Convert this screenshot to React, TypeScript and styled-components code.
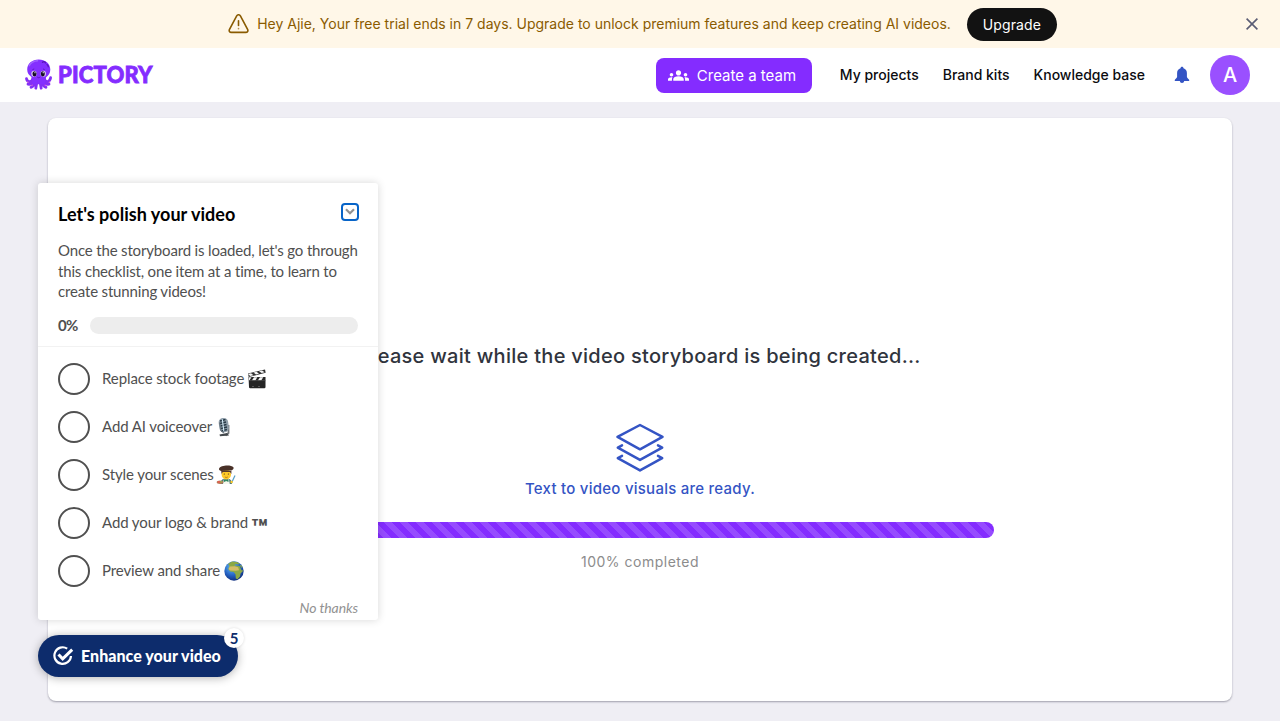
import React from "react";
import styled, { createGlobalStyle } from "styled-components";
import { MdGroups } from "react-icons/md";

const GlobalStyle = createGlobalStyle`
  *, *::before, *::after { box-sizing: border-box; }
  html, body, #root { height: 100%; margin: 0; }
  body { background: #efeef4; font-family: Inter, "Liberation Sans", sans-serif; overflow: hidden; }
  button { font: inherit; border: 0; padding: 0; background: none; cursor: pointer; }
  svg { display: block; flex: none; }
`;

const Page = styled.div`
  position: relative;
  display: flex;
  flex-direction: column;
  height: 721px;
`;

const Banner = styled.div`
  flex: none;
  display: grid;
  grid-template-columns: 56px 1fr 56px;
  align-items: center;
  height: 48px;
  background: #fff7e8;
  color: #8a5b00;
`;

const BannerContent = styled.div`
  grid-column: 2;
  display: flex;
  align-items: center;
  justify-content: center;
  padding-left: 5px;
`;

const BannerText = styled.span`
  margin: 0 16px 0 8px;
  font-size: 14px;
  line-height: 20px;
  white-space: nowrap;
`;

const UpgradeButton = styled.button`
  width: 90px;
  height: 33px;
  border-radius: 17px;
  background: #121212;
  color: #fff;
  font-size: 14px;
  letter-spacing: 0.1px;
`;

const CloseButton = styled.button`
  justify-self: center;
  color: #5a5c74;
`;

const Header = styled.header`
  flex: none;
  display: flex;
  align-items: center;
  height: 54px;
  padding: 0 30px 0 24px;
  background: #fff;
`;

const Logo = styled.div`
  display: flex;
  align-items: center;
  gap: 4px;
  margin-right: auto;
`;

const LogoText = styled.span`
  color: #842cff;
  font-family: Lato, sans-serif;
  font-size: 22px;
  font-weight: 900;
  letter-spacing: 0.15px;
  line-height: 30px;
  -webkit-text-stroke: 0.8px #842cff;
`;

const TeamButton = styled.button`
  display: flex;
  align-items: center;
  gap: 8px;
  width: 156px;
  height: 35px;
  margin-right: 28px;
  padding-left: 12px;
  border-radius: 8px;
  background: #842cff;
  color: #fff;
  font-size: 15px;
  white-space: nowrap;
`;

const Nav = styled.nav`
  display: flex;
  gap: 24px;
  margin-right: 29px;
`;

const NavLink = styled.span`
  color: #0c0c10;
  font-size: 14px;
  font-weight: 500;
  line-height: 20px;
  white-space: nowrap;
`;

const Avatar = styled.div`
  display: grid;
  place-items: center;
  width: 40px;
  height: 40px;
  margin-left: 20px;
  border-radius: 50%;
  background: #9a50ff;
  color: #fff;
  font-size: 20px;
  font-weight: 500;
`;

const Stage = styled.main`
  flex: 1;
  display: flex;
  padding: 16px 48px 20px;
`;

const StoryCard = styled.section`
  flex: 1;
  display: flex;
  flex-direction: column;
  align-items: center;
  padding-top: 223px;
  border-radius: 8px;
  background: #fff;
  box-shadow: 0 1px 2px rgba(30, 30, 50, 0.38);
`;

const WaitTitle = styled.h1`
  margin: 0;
  color: #30343d;
  font-size: 20px;
  font-weight: 450;
  letter-spacing: 0.28px;
  line-height: 30px;
`;

const LayersIcon = styled.svg`
  margin-top: 52px;
`;

const ReadyText = styled.p`
  margin: 6px 0 0;
  color: #3454c4;
  font-size: 15px;
  font-weight: 450;
  letter-spacing: 0.25px;
  line-height: 22px;
`;

const ProgressBar = styled.div`
  width: 707px;
  height: 16px;
  margin-top: 22px;
  border-radius: 8px;
  background: linear-gradient(
      45deg,
      rgba(255, 255, 255, 0.15) 25%,
      transparent 25%,
      transparent 50%,
      rgba(255, 255, 255, 0.15) 50%,
      rgba(255, 255, 255, 0.15) 75%,
      transparent 75%
    )
    0 0 / 16px 16px #842cff;
`;

const ProgressLabel = styled.p`
  margin: 14px 0 0;
  color: #8c8c8c;
  font-size: 14px;
  letter-spacing: 0.5px;
  line-height: 20px;
`;

const Checklist = styled.aside`
  position: absolute;
  left: 38px;
  top: 183px;
  display: flex;
  flex-direction: column;
  width: 340px;
  height: 436.5px;
  border-radius: 3px;
  background: #fff;
  box-shadow: 0 0 8px rgba(0, 0, 0, 0.16);
  color: #505050;
  font-family: Lato, sans-serif;
`;

const ChecklistHead = styled.div`
  height: 163.5px;
  padding: 18px 20px 0;
  border-bottom: 1.5px solid #f2f2f2;
`;

const TitleRow = styled.div`
  display: flex;
  justify-content: space-between;
`;

const ChecklistTitle = styled.h2`
  margin: 0;
  color: #000;
  font-size: 18px;
  font-weight: 700;
  letter-spacing: 0.02px;
  line-height: 26px;
`;

const CollapseButton = styled.button`
  display: grid;
  place-items: center;
  width: 18px;
  height: 18px;
  margin: 1.5px -1px 0 0;
  border: 2px solid #0864c8;
  border-radius: 4px;
`;

const Description = styled.p`
  margin: 13px -4px 0 0;
  font-size: 15px;
  letter-spacing: -0.16px;
  line-height: 20.5px;
  white-space: nowrap;
`;

const PercentRow = styled.div`
  display: flex;
  align-items: center;
  height: 17px;
  margin-top: 15px;
  font-size: 15px;
  font-weight: 700;
  letter-spacing: -0.7px;
`;

const PercentValue = styled.span`
  width: 32px;
`;

const PercentTrack = styled.div`
  flex: 1;
  height: 17px;
  border-radius: 9px;
  background: #ededed;
`;

const Tasks = styled.ul`
  display: flex;
  flex-direction: column;
  gap: 16px;
  margin: 0;
  padding: 16px 20px 0;
  list-style: none;
`;

const Task = styled.li`
  display: flex;
  align-items: center;
  height: 32px;
  font-size: 15px;
  letter-spacing: -0.1px;
`;

const TaskCircle = styled.span`
  width: 32px;
  height: 32px;
  margin-right: 12px;
  border: 2px solid #505050;
  border-radius: 50%;
`;

const TaskLabel = styled.span<{ $gap: number }>`
  margin: -1px ${(p) => p.$gap}px 0 0;
  white-space: nowrap;
`;

const Dismiss = styled.button`
  align-self: flex-end;
  margin: 11px 20px 0;
  color: #929292;
  font-size: 14px;
  font-style: italic;
  letter-spacing: -0.1px;
  line-height: 20px;
`;

const Launcher = styled.button`
  position: absolute;
  left: 38px;
  top: 634.5px;
  display: flex;
  align-items: center;
  gap: 7px;
  width: 200px;
  height: 42px;
  padding-left: 15px;
  border-radius: 21px;
  background: #0d2c6c;
  box-shadow: 0 1px 10px rgba(0, 0, 0, 0.3);
  color: #fff;
  font-family: Lato, sans-serif;
  font-size: 16px;
  font-weight: 900;
  letter-spacing: 0.03px;
  white-space: nowrap;
`;

const LauncherBadge = styled.span`
  position: absolute;
  right: -6px;
  top: -6.5px;
  display: grid;
  place-items: center;
  width: 20px;
  height: 20px;
  border-radius: 50%;
  background: #fff;
  box-shadow: 0 0 3px rgba(0, 0, 0, 0.15);
  color: #0d2c6c;
  font-size: 15px;
  font-weight: 700;
  line-height: 20px;
`;

const Octopus = () => (
  <svg width="30" height="32" viewBox="0 0.8 30 32">
    <g fill="none" stroke="#8430f5" strokeWidth="2.8" strokeLinecap="round">
      <path d="M9 20C7 26 3 23 2.500 20.500M20 20c2 6 6 3 6.600-.5M10 21c-1 6-4 5-6 5M19 21c1 6 4 5 6 5M11 22c0 6-2 6-4 7M18 22c0 6 2 6 4 7M13 23l-1.200 7M16 23l1.200 7" />
    </g>
    <path fill="#8430ff" d="M14.700 1.400C8 1.400 3.200 5.700 3.200 11.400c0 3.600 1.800 5.700 4.300 7.500L8.500 26h12.400l1.200-7c2.600-1.800 4.200-4 4.200-7.600 0-5.700-5-10-11.600-10Z" />
    <path d="M5.200 7.400C7 4.300 10 2.600 13.500 2.500" stroke="#a063ff" strokeWidth="1.500" fill="none" strokeLinecap="round" />
    <path d="M18.500 4c1-1 2.600-.4 3 .7M23 6.500c1 .4 1.200 1.200 1.300 2" stroke="#5a16bc" strokeWidth="1.400" fill="none" strokeLinecap="round" />
    <ellipse cx="10" cy="15.500" rx="2.700" ry="3" fill="#d8c5ee" />
    <ellipse cx="19.300" cy="15.500" rx="2.700" ry="3" fill="#d8c5ee" />
    <ellipse cx="10.500" cy="15.600" rx="2" ry="2.600" fill="#160b25" />
    <ellipse cx="18.800" cy="15.600" rx="2" ry="2.600" fill="#160b25" />
    <circle cx="11" cy="14.500" r=".6" fill="#fff" />
    <circle cx="19.200" cy="14.500" r=".6" fill="#fff" />
    <path d="M8.500 11.300l1.700-.5M19 10.800l1.700.5M13.200 18.800c1 .9 2 .9 3 0" stroke="#5713b4" fill="none" strokeWidth=".8" />
    <path d="M3.300 23.500l1.200.8M25 24.300l1.200-.8M7.500 27.500l1-.8M20.800 26.700l1 .8" stroke="#df65d5" strokeWidth="1.100" />
  </svg>
);

const WarningIcon = () => (
  <svg width="21" height="20" viewBox="0 0 21 20" fill="none" stroke="#8a5b00" strokeWidth="1.600" strokeLinecap="round" strokeLinejoin="round">
    <path d="M8.700 1.900 1.500 15.400c-.8 1.600.1 3 1.900 3h14.300c1.800 0 2.700-1.400 1.900-3L12.400 1.900c-.9-1.500-2.800-1.500-3.700 0Z" />
    <path d="M10.500 6.800v4.700" />
    <path d="M10.500 14.600v.1" strokeOpacity=".65" />
  </svg>
);

const BellIcon = () => (
  <svg width="16" height="18" viewBox="0 0 16 18" fill="#3454c4">
    <path d="M8 .8c-.9 0-1.500.6-1.500 1.500C4.400 3 3.100 4.700 3.100 7v3.800c0 .9-1.500 2-2.200 2.900-.5.6-.2 1.300.6 1.300h13c.8 0 1.100-.7.600-1.300-.7-.9-2.200-2-2.200-2.900V7c0-2.300-1.300-4-3.400-4.700C9.500 1.400 8.900.8 8 .8Z" />
    <path d="M5.900 15h4.200c0 1.200-.9 2-2.100 2s-2.100-.8-2.100-2Z" />
  </svg>
);

const Clapper = () => (
  <svg width="20" height="20" viewBox="0 0 20 20">
    <path fill="#252525" d="M1.500 8h17v10q0 1.200-1.200 1.200H3.200Q2 19.200 2 18Z" />
    <path fill="#303030" d="M1 4.500 18 .5l.7 3.300L1.700 8Z" />
    <path fill="#f4f4f4" d="m1 5 3-.8 2.500 2-3.300.8ZM6.500 3.500l3-.7 2.500 2-3 .8ZM12 2.200l3-.7 2.700 1.800-3 .8ZM2 8.300h2.500l-2 3H2ZM7 8.300h3.400l-2 3H5ZM13 8.300h3.300l-2 3H11Z" />
    <path d="M2 11.600h16.500" stroke="#555" strokeWidth=".6" />
    <circle cx="6" cy="17.500" r=".5" fill="#aaa" /><circle cx="12" cy="17.500" r=".5" fill="#aaa" />
  </svg>
);

const Microphone = () => (
  <svg width="20" height="20" viewBox="0 0 20 20">
    <path d="M13.500 8v8l-3 2.500" stroke="#73777b" strokeWidth="1.800" fill="none" />
    <path fill="#44494d" d="M4.500 17.500 12 16l2 2.500-9 .8Z" />
    <rect x="4" y="1" width="9.500" height="14.500" rx="4.500" fill="#8f9eaa" transform="rotate(-8 8 8)" />
    <path d="m5 4 5.500-1.500M5 6.500 11 5M5.500 9l6-1.500M6 11.500l6-1.500M6.500 14l5.500-1.500" stroke="#273946" strokeWidth="1.300" />
    <path d="M7.300 2.200 8.800 14" stroke="#d5edfa" strokeWidth="1.100" />
    <path d="M4.500 5.500 6 14l3 2" stroke="#65717b" fill="none" />
  </svg>
);

const Artist = () => (
  <svg width="20" height="20" viewBox="0 0 20 20">
    <path fill="#527a78" d="M4 19q.5-5 5-5.500h3q4 .8 4 5.500Z" />
    <path fill="#f7f7ed" d="m8 13.500 2.300 2.800 2.500-2.800 1 5.500H7Z" />
    <path fill="#24845b" d="m8 14 2.200 1.400L12.500 14v3l-2.200-1L8 17Z" />
    <ellipse cx="10.300" cy="9.500" rx="4.700" ry="5" fill="#ffca28" />
    <path fill="#543930" d="M5.200 6h10.200v3l-1.500-2H6.800l-1.300 2Z" />
    <path fill="#493128" d="M3 3.700C4 .3 15-.6 17.400 2.300c.8 1.400-.7 2.700-2 3.200L5.300 6C3.900 5.700 2.800 4.900 3 3.700Z" />
    <circle cx="8.300" cy="9" r=".6" fill="#403020" /><circle cx="12.400" cy="9" r=".6" fill="#403020" />
    <path d="M8.800 12q1.500 1 3 0" stroke="#976020" strokeWidth=".7" fill="none" />
    <ellipse cx="4" cy="17.300" rx="3.300" ry="1.700" fill="#ba7954" />
    <circle cx="2.800" cy="16.900" r=".9" fill="#ef5350" /><circle cx="5.200" cy="16.700" r=".8" fill="#8bc34a" />
    <path d="m15.500 18 3.500-7.500" stroke="#569dc5" strokeWidth="1.200" />
    <circle cx="15.600" cy="17" r="1.200" fill="#ffca28" />
  </svg>
);

const Trademark = styled.span`
  font-family: Inter, sans-serif;
  font-size: 26px;
  font-weight: 800;
  line-height: 20px;
  transform: translateY(5.5px);
`;

const Globe = () => (
  <svg width="20" height="20" viewBox="0 0 20 20">
    <defs>
      <radialGradient id="ocean" cx=".4" cy=".3" r=".7">
        <stop offset="0" stopColor="#69c0f5" />
        <stop offset=".6" stopColor="#2563c4" />
        <stop offset="1" stopColor="#123282" />
      </radialGradient>
    </defs>
    <circle cx="10" cy="10" r="9.700" fill="url(#ocean)" />
    <path fill="#8ba844" d="m4 3 4-2.400 5 .5 3 2-2.500.5-1.500-.7-2 1.300 3 .6 2.500.2 2 4.200 2 .2-3 3.200-.5 3-2.500 2.700-1.700-.7-.3-4-1.800-2.700-3.500-.4-2-2.600L5.500 5Z" />
    <path fill="#d4bd68" d="m5.700 5.400 5-.2 3.500 1 .8 3-3.500.5-5.500-.3L4.600 8Z" />
    <path fill="#8ba844" d="m17 4 1.700 2.700-1.500-.2-1.400-2Z" />
  </svg>
);

const tasks = [
  { label: "Replace stock footage", gap: 3, mark: <Clapper /> },
  { label: "Add AI voiceover", gap: 3, mark: <Microphone /> },
  { label: "Style your scenes", gap: 2, mark: <Artist /> },
  { label: "Add your logo & brand", gap: 3, mark: <Trademark>™</Trademark> },
  { label: "Preview and share", gap: 4, mark: <Globe /> },
];

export default function App() {
  return (
    <Page>
      <GlobalStyle />
      <Banner>
        <BannerContent>
          <WarningIcon />
          <BannerText>Hey Ajie, Your free trial ends in 7 days. Upgrade to unlock premium features and keep creating AI videos.</BannerText>
          <UpgradeButton>Upgrade</UpgradeButton>
        </BannerContent>
        <CloseButton aria-label="Close">
          <svg width="12" height="12" viewBox="0 0 12 12" stroke="currentColor" strokeWidth="1.600"><path d="m.6.600 10.800 10.800M11.400.6.600 11.400" /></svg>
        </CloseButton>
      </Banner>
      <Header>
        <Logo>
          <Octopus />
          <LogoText>PICTORY</LogoText>
        </Logo>
        <TeamButton>
          <MdGroups size={21} />
          Create a team
        </TeamButton>
        <Nav>
          <NavLink>My projects</NavLink>
          <NavLink>Brand kits</NavLink>
          <NavLink>Knowledge base</NavLink>
        </Nav>
        <BellIcon />
        <Avatar>A</Avatar>
      </Header>
      <Stage>
        <StoryCard>
          <WaitTitle>Please wait while the video storyboard is being created...</WaitTitle>
          <LayersIcon width="48" height="49" viewBox="0 0 48 49" fill="none" stroke="#3454c4" strokeWidth="2.500" strokeLinejoin="round" strokeLinecap="round">
            <path d="M24 2 46.500 13.800 24 26.300 1.500 13.800Z" />
            <path d="M6 22.400 1.800 24.600 24 36.900l22.200-12.300-4.200-2.200" />
            <path d="M6 32.900 1.800 35.100 24 47.400l22.200-12.300-4.200-2.200" />
          </LayersIcon>
          <ReadyText>Text to video visuals are ready.</ReadyText>
          <ProgressBar />
          <ProgressLabel>100% completed</ProgressLabel>
        </StoryCard>
      </Stage>
      <Checklist>
        <ChecklistHead>
          <TitleRow>
            <ChecklistTitle>Let's polish your video</ChecklistTitle>
            <CollapseButton aria-label="Collapse">
              <svg width="10" height="7" viewBox="0 0 10 7" fill="none" stroke="#929292" strokeWidth="2.200"><path d="m1 1.200 4 4 4-4" /></svg>
            </CollapseButton>
          </TitleRow>
          <Description>
            Once the storyboard is loaded, let's go through<br />
            this checklist, one item at a time, to learn to<br />
            create stunning videos!
          </Description>
          <PercentRow>
            <PercentValue>0%</PercentValue>
            <PercentTrack />
          </PercentRow>
        </ChecklistHead>
        <Tasks>
          {tasks.map((t) => (
            <Task key={t.label}>
              <TaskCircle />
              <TaskLabel $gap={t.gap}>{t.label}</TaskLabel>
              {t.mark}
            </Task>
          ))}
        </Tasks>
        <Dismiss>No thanks</Dismiss>
      </Checklist>
      <Launcher>
        <svg width="21" height="20" viewBox="0 0 21 20" fill="none" stroke="#fff" strokeWidth="2.200">
          <path d="M14.200 2.600A8.300 8.300 0 1 0 18 10" />
          <path d="m5.500 8.500 4.200 4.400 9.500-9.200" strokeWidth="3" />
        </svg>
        Enhance your video
        <LauncherBadge>5</LauncherBadge>
      </Launcher>
    </Page>
  );
}
